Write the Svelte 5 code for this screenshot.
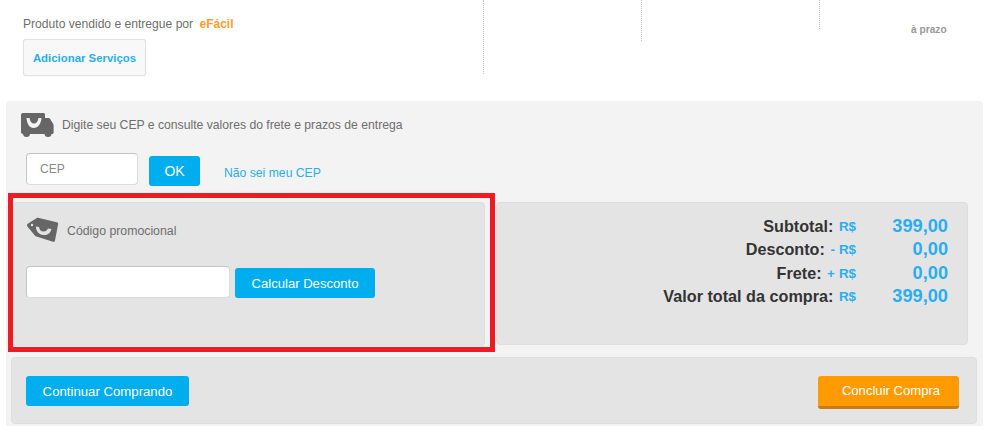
<script lang="ts">
  const totals = [
    { label: 'Subtotal:', sign: '', value: '399,00' },
    { label: 'Desconto:', sign: '-', value: '0,00' },
    { label: 'Frete:', sign: '+', value: '0,00' },
    { label: 'Valor total da compra:', sign: '', value: '399,00' }
  ]
</script>

<div class="page">
  <section class="product">
    <div class="seller">
      <p class="sold-by">Produto vendido e entregue por <b>eFácil</b></p>
      <button class="services">Adicionar Serviços</button>
    </div>
    <div class="col col-qty"></div>
    <div class="col col-unit"></div>
    <div class="col-term">à prazo</div>
  </section>

  <section class="checkout">
    <div class="shipping-head">
      <svg class="truck" width="33" height="24" viewBox="0 0 33 24">
        <path fill="#666" d="M2 0h20.500c.8 0 1.500.7 1.500 1.500V5h3.500c.8 0 1.300.3 1.700.9l3 5.100c.3.500.4 1 .4 1.500v7c0 .9-.6 1.500-1.500 1.500H2c-1.200 0-2-.8-2-2V2C0 .8.800 0 2 0z"/>
        <circle cx="5.500" cy="20.500" r="3.500" fill="#666"/>
        <circle cx="27" cy="20.500" r="3.500" fill="#666"/>
        <path fill="#f3f3f3" d="M5.500 5h3c.5 3.500 2 5.500 4.500 5.500S17 8.500 17.500 5h3c-.5 6-3.500 10-7.800 10S6 11 5.500 5z"/>
      </svg>
      <span>Digite seu CEP e consulte valores do frete e prazos de entrega</span>
    </div>
    <div class="cep-row">
      <input class="field cep" placeholder="CEP" />
      <button class="btn ok">OK</button>
      <a class="cep-link" href="#cep">Não sei meu CEP</a>
    </div>

    <div class="panels">
      <div class="panel promo">
        <div class="promo-head">
          <svg class="tag" width="32" height="25" viewBox="0 0 32 25">
            <path fill="#666" d="M.7 6.800 9.500 1.300C10.300.8 11 .7 12 .9l17.800 4.300c1 .3 1.500 1 1.300 2L28 23.500c-.2 1-1 1.600-2 1.300L9.500 19.600c-.7-.2-1.200-.5-1.600-1.100L.4 9.500C-.2 8.500-.1 7.400.7 6.800z"/>
            <circle cx="5" cy="8" r="1.200" fill="#e4e4e4"/>
            <path fill="#e4e4e4" d="M9 9.500l3 .5c.5 3 2 4.500 4.500 4.500s3.500-1 4.500-3l3.500.5c-1 4-4 6.500-8.300 6C11.500 17.500 9 14 9 9.500z"/>
          </svg>
          <span>Código promocional</span>
        </div>
        <div class="promo-row">
          <input class="field code" />
          <button class="btn calc">Calcular Desconto</button>
        </div>
      </div>

      <div class="panel totals">
        {#each totals as row}
          <div class="total-row">
            <span class="label">{row.label}</span>
            <span class="currency">{#if row.sign}<i>{row.sign}</i>{/if}R$</span>
            <span class="value">{row.value}</span>
          </div>
        {/each}
      </div>
    </div>

    <div class="panel actions">
      <button class="btn keep">Continuar Comprando</button>
      <button class="btn finish">Concluir Compra</button>
    </div>

    <div class="highlight"></div>
  </section>
</div>

<style>
  :global(body) {
    margin: 0;
    background: #fff;
    font-family: "Liberation Sans", Arial, sans-serif;
  }

  .page {
    width: 1000px;
    height: 426px;
    overflow: hidden;
  }

  button, input {
    font-family: inherit;
  }

  .product {
    display: flex;
    align-items: flex-start;
    height: 101px;
  }

  .seller {
    box-sizing: border-box;
    width: 484px;
    height: 74px;
    padding: 17px 0 0 23px;
    border-right: 1px dotted #c4c4c4;
  }

  .sold-by {
    margin: 0;
    font-size: 12.1px;
    line-height: 14px;
    color: #6e6e6e;
  }

  .sold-by b {
    margin-left: 3px;
    font-size: 12px;
    color: #ff9c28;
  }

  .services {
    display: block;
    box-sizing: border-box;
    width: 123px;
    height: 37px;
    margin-top: 8px;
    padding: 0;
    background: #f8f8f8;
    border: 1px solid #e2e2e2;
    border-radius: 3px;
    box-shadow: 0 0 1px #ddd;
    color: #29aef0;
    font-size: 11.4px;
    font-weight: bold;
  }

  .col {
    box-sizing: border-box;
    border-right: 1px dotted #c4c4c4;
  }

  .col-qty {
    width: 158px;
    height: 41px;
  }

  .col-unit {
    width: 178px;
    height: 29px;
  }

  .col-term {
    margin: 24px 0 0 91px;
    font-size: 10.2px;
    line-height: 12px;
    font-weight: bold;
    color: #999;
  }

  .checkout {
    position: relative;
    box-sizing: border-box;
    width: 977px;
    height: 325px;
    margin-left: 6px;
    padding-top: 12px;
    background: #f3f3f3;
    border-radius: 4px 4px 0 0;
  }

  .shipping-head {
    display: flex;
    align-items: center;
    gap: 8px;
    height: 24px;
    padding-left: 15px;
    font-size: 12.2px;
    color: #6e6e6e;
  }

  .cep-row {
    display: flex;
    align-items: flex-start;
    margin: 16px 0 0 20px;
    height: 33px;
  }

  .field {
    box-sizing: border-box;
    height: 32px;
    padding: 0 13px;
    background: #fff;
    border: 1px solid #dcdcdc;
    border-top-color: #c4c4c4;
    border-left-color: #c4c4c4;
    border-radius: 4px;
    font-size: 12px;
    outline: none;
  }

  .field::placeholder {
    color: #8a8a8a;
  }

  .cep {
    width: 112px;
  }

  .btn {
    box-sizing: border-box;
    padding: 0;
    border: 0;
    border-radius: 3px;
    background: #00aeef;
    color: #fff;
    font-size: 13.1px;
  }

  .ok {
    width: 51px;
    height: 30px;
    margin: 3px 0 0 11px;
    font-size: 14px;
  }

  .cep-link {
    margin: 12.500px 0 0 24px;
    font-size: 12.2px;
    line-height: 14px;
    color: #29aef0;
    text-decoration: none;
  }

  .panels {
    display: flex;
    gap: 11px;
    margin: 16px 0 0 7px;
  }

  .panel {
    box-sizing: border-box;
    background: #e4e4e4;
    border: 1px solid #dedede;
    border-radius: 4px;
  }

  .promo {
    width: 472px;
    height: 144px;
    padding: 14px 0 0 12px;
  }

  .promo-head {
    display: flex;
    align-items: center;
    gap: 8px;
    height: 25px;
    padding-left: 1px;
    font-size: 12.3px;
    color: #6e6e6e;
  }

  .promo-head span {
    margin-top: 2px;
  }

  .promo-row {
    display: flex;
    align-items: flex-end;
    gap: 5px;
    margin-top: 24px;
  }

  .code {
    width: 204px;
  }

  .calc {
    width: 140px;
    height: 30px;
  }

  .totals {
    width: 472px;
    height: 143px;
    padding-top: 11.500px;
  }

  .total-row {
    display: flex;
    justify-content: flex-end;
    align-items: center;
    height: 23.500px;
    padding-right: 19px;
    color: #333;
  }

  .label {
    font-size: 16.2px;
    font-weight: bold;
  }

  .currency {
    margin-left: 5.500px;
    font-size: 13.4px;
    font-weight: bold;
    color: #29aef0;
  }

  .currency i {
    margin-right: 4px;
    font-style: normal;
  }

  .value {
    width: 92px;
    text-align: right;
    font-size: 18.2px;
    font-weight: bold;
    color: #29aef0;
  }

  .actions {
    display: flex;
    justify-content: space-between;
    align-items: flex-start;
    width: 966px;
    height: 67px;
    margin: 11px 0 0 5px;
    padding: 18px 17px 0 14px;
  }

  .keep {
    width: 163px;
    height: 30px;
    font-size: 13.2px;
  }

  .finish {
    width: 141px;
    height: 33px;
    padding: 0 0 1px 5px;
    background: #ff9a00;
    border-bottom: 3px solid #c87d12;
  }

  .highlight {
    position: absolute;
    left: 2px;
    top: 92px;
    box-sizing: border-box;
    width: 487px;
    height: 159px;
    border: 5px solid #ed1c24;
    pointer-events: none;
  }
</style>
